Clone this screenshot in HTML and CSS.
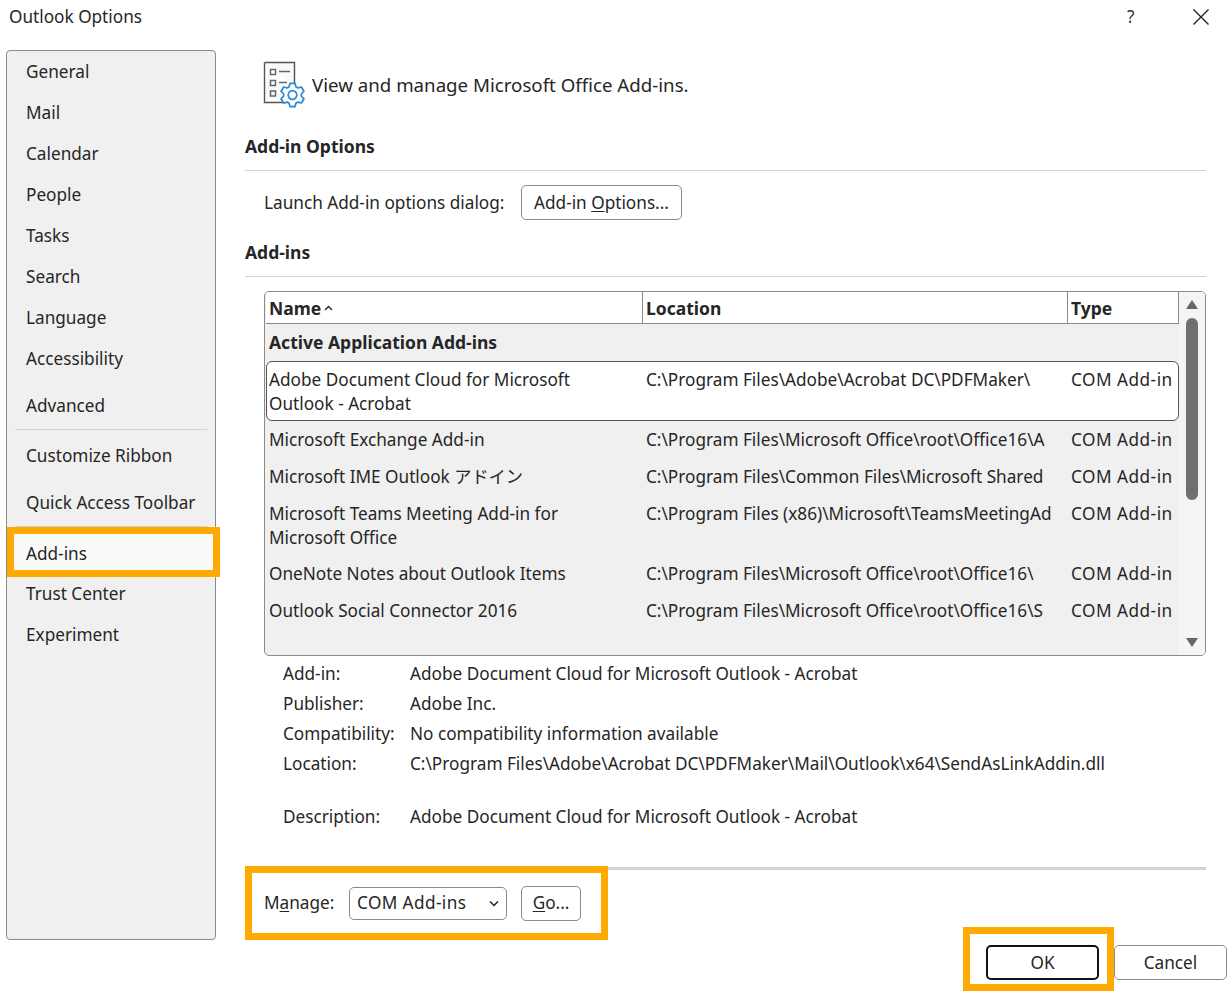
FILE: index.html
```html
<!DOCTYPE html>
<html lang="en">

<head>
    <meta charset="UTF-8">
    <meta name="viewport" content="width=device-width, initial-scale=1.0">
    <title>Outlook Options</title>
    <link rel="stylesheet" href="styles.css">
</head>

<body>
    <div class="titlebar">
        <div class="title">Outlook Options</div>
        <div class="help">?</div>
        <div class="close">
            <svg width="18" height="18" viewBox="0 0 18 18">
                <path d="M1.5 1.5L16.5 16.5M16.5 1.5L1.5 16.5" stroke="#222" stroke-width="1.4" fill="none" />
            </svg>
        </div>
    </div>

    <div class="content">
        <div class="sidebar">
            <div class="nav-item">General</div>
            <div class="nav-item">Mail</div>
            <div class="nav-item">Calendar</div>
            <div class="nav-item">People</div>
            <div class="nav-item">Tasks</div>
            <div class="nav-item">Search</div>
            <div class="nav-item">Language</div>
            <div class="nav-item">Accessibility</div>
            <div class="nav-item spaced">Advanced</div>
            <div class="nav-sep"></div>
            <div class="nav-item spaced">Customize Ribbon</div>
            <div class="nav-item spaced">Quick Access Toolbar</div>
            <div class="nav-sep"></div>
            <div class="nav-item selected">Add-ins</div>
            <div class="nav-item">Trust Center</div>
            <div class="nav-item">Experiment</div>
        </div>

        <div class="main">
            <div class="page-head">
                <svg class="page-icon" width="44" height="48" viewBox="0 0 44 48">
                    <path d="M2.5 2.5H32.5V26M24 42.5H2.5V2.5" fill="#fafafa" stroke="#555" stroke-width="1.4" />
                    <rect x="8.5" y="9.5" width="5" height="5" fill="none" stroke="#666" stroke-width="1.5" />
                    <rect x="8.5" y="20.5" width="5" height="5" fill="none" stroke="#666" stroke-width="1.5" />
                    <rect x="8.5" y="31" width="5" height="5" fill="none" stroke="#666" stroke-width="1.5" />
                    <path d="M17 11.5H28M17 22.5H25" stroke="#666" stroke-width="1.3" fill="none" />
                    <g transform="translate(30.5 35)">
                        <path d="M-2.5-11.7L2.5-11.7L3.4-8.3L5.5-7.1L8.9-8L11.4-3.7L8.9-1.25L8.9 1.25L11.4 3.7L8.9 8L5.5 7.1L3.4 8.3L2.5 11.7L-2.5 11.7L-3.4 8.3L-5.5 7.1L-8.9 8L-11.4 3.7L-8.9 1.25L-8.9-1.25L-11.4-3.7L-8.9-8L-5.5-7.1L-3.4-8.3Z"
                            fill="#fff" stroke="#2b88d8" stroke-width="1.7" stroke-linejoin="round" />
                        <circle r="4.3" fill="#fff" stroke="#2b88d8" stroke-width="1.7" />
                    </g>
                </svg>
                <div class="page-title">View and manage Microsoft Office Add-ins.</div>
            </div>

            <div class="section-head first">Add-in Options</div>
            <div class="launch-row">
                <div class="launch-label">Launch Add-in options dialog:</div>
                <div class="btn options-btn"><span>Add-in <u>O</u>ptions...</span></div>
            </div>

            <div class="section-head">Add-ins</div>

            <div class="list">
                <div class="list-body">
                    <div class="row list-header">
                        <div class="name-head">Name
                            <svg width="9" height="6" viewBox="0 0 9 6">
                                <path d="M1 5L4.5 1.5L8 5" fill="none" stroke="#333" stroke-width="1.5" />
                            </svg>
                        </div>
                        <div>Location</div>
                        <div>Type</div>
                    </div>
                    <div class="group-row">Active Application Add-ins</div>
                    <div class="row current">
                        <div>Adobe Document Cloud for Microsoft Outlook - Acrobat</div>
                        <div>C:\Program Files\Adobe\Acrobat DC\PDFMaker\</div>
                        <div class="type">COM Add-in</div>
                    </div>
                    <div class="row">
                        <div>Microsoft Exchange Add-in</div>
                        <div>C:\Program Files\Microsoft Office\root\Office16\A</div>
                        <div class="type">COM Add-in</div>
                    </div>
                    <div class="row">
                        <div>Microsoft IME Outlook アドイン</div>
                        <div>C:\Program Files\Common Files\Microsoft Shared</div>
                        <div class="type">COM Add-in</div>
                    </div>
                    <div class="row two-line">
                        <div>Microsoft Teams Meeting Add-in for Microsoft Office</div>
                        <div>C:\Program Files (x86)\Microsoft\TeamsMeetingAd</div>
                        <div class="type">COM Add-in</div>
                    </div>
                    <div class="row">
                        <div>OneNote Notes about Outlook Items</div>
                        <div>C:\Program Files\Microsoft Office\root\Office16\</div>
                        <div class="type">COM Add-in</div>
                    </div>
                    <div class="row">
                        <div>Outlook Social Connector 2016</div>
                        <div>C:\Program Files\Microsoft Office\root\Office16\S</div>
                        <div class="type">COM Add-in</div>
                    </div>
                </div>
                <div class="scrollbar">
                    <svg width="14" height="11" viewBox="0 0 14 11">
                        <path d="M7 1L13 10H1Z" fill="#666" />
                    </svg>
                    <div class="thumb"></div>
                    <svg width="14" height="11" viewBox="0 0 14 11">
                        <path d="M7 10L13 1H1Z" fill="#666" />
                    </svg>
                </div>
            </div>

            <div class="details">
                <div>Add-in:</div>
                <div>Adobe Document Cloud for Microsoft Outlook - Acrobat</div>
                <div>Publisher:</div>
                <div>Adobe Inc.</div>
                <div>Compatibility:</div>
                <div>No compatibility information available</div>
                <div>Location:</div>
                <div>C:\Program Files\Adobe\Acrobat DC\PDFMaker\Mail\Outlook\x64\SendAsLinkAddin.dll</div>
                <div class="desc">Description:</div>
                <div class="desc">Adobe Document Cloud for Microsoft Outlook - Acrobat</div>
            </div>

            <div class="manage-rule">
                <div class="manage-box">
                    <div class="manage-label">M<u>a</u>nage:</div>
                    <div class="select"><span class="select-text">COM Add-ins</span>
                        <svg width="10" height="7" viewBox="0 0 10 7">
                            <path d="M1 1.5L5 5.5L9 1.5" fill="none" stroke="#222" stroke-width="1.5" />
                        </svg>
                    </div>
                    <div class="btn go-btn"><span><u>G</u>o...</span></div>
                </div>
            </div>
        </div>
    </div>

    <div class="footer">
        <div class="ok-box">
            <div class="btn ok-btn">OK</div>
        </div>
        <div class="btn cancel-btn">Cancel</div>
    </div>
</body>

</html>
```

FILE: styles.css
```css
* {
    box-sizing: border-box;
}

html,
body {
    margin: 0;
    height: 100%;
    overflow: hidden;
}

body {
    background-color: #fff;
    color: #262626;
    font-family: "Noto Sans", "Noto Sans CJK JP", sans-serif;
    font-size: 17.2px;
    line-height: 24px;
}

u {
    text-underline-offset: 2px;
}

/* Title bar */
.titlebar {
    display: flex;
    align-items: center;
    height: 34px;
    margin-bottom: 16px;
    padding-left: 9px;
}

.title {
    flex: 1;
}

.help {
    width: 10px;
    margin-right: 55px;
    color: #333;
}

.close {
    display: flex;
    margin-right: 21px;
}

.content {
    display: flex;
    height: 890px;
}

/* Left navigation */
.sidebar {
    width: 210px;
    height: 890px;
    margin-left: 6px;
    padding-top: 1px;
    background-color: #f0f0f0;
    border: 1px solid #8a8a8a;
    border-radius: 4px;
}

.nav-item {
    display: flex;
    align-items: center;
    height: 41px;
    padding-left: 19px;
    padding-bottom: 2px;
}

.spaced {
    margin-top: 6px;
}

.nav-sep {
    height: 1px;
    margin: 2px 8px 0 8px;
    background-color: #d2d2d2;
}

.selected {
    position: relative;
    width: 213px;
    height: 50px;
    margin: 0 0 -3px 0;
    padding-left: 12px;
    padding-top: 3px;
    padding-bottom: 0;
    background-color: #fafafa;
    border: 7px solid #ffaa00;
}

/* Main panel */
.main {
    width: 961px;
    margin-left: 29px;
}

.page-head {
    display: flex;
    align-items: center;
    height: 50px;
    margin-left: 17px;
    margin-top: 8px;
}

.page-icon {
    margin-top: 2px;
    margin-right: 6px;
}

.page-title {
    margin-top: 3px;
    font-size: 18.7px;
}

.section-head {
    margin-top: 20px;
    padding-bottom: 12px;
    border-bottom: 1px solid #d2d2d2;
    font-size: 17.5px;
    font-weight: 700;
}

.first {
    margin-top: 26px;
}

.launch-row {
    display: flex;
    align-items: center;
    margin-top: 14px;
    padding-left: 19px;
}

.launch-label {
    width: 257px;
}

.btn {
    display: flex;
    align-items: center;
    justify-content: center;
    height: 35px;
    background-color: #fff;
    border: 1px solid #8a8a8a;
    border-radius: 5px;
}

.options-btn {
    width: 161px;
}

/* Add-ins list */
.list {
    display: flex;
    height: 365px;
    margin-top: 14px;
    margin-left: 19px;
    background-color: #f0f0f0;
    border: 1px solid #8a8a8a;
    border-radius: 5px;
    overflow: hidden;
}

.list-body {
    width: 914px;
    padding-left: 1px;
}

.row {
    display: grid;
    grid-template-columns: 377px 425px 111px;
    padding: 7px 0 6px 0;
}

.row > div {
    padding-left: 3px;
    white-space: nowrap;
}

.row > div:first-child {
    white-space: normal;
    padding-right: 60px;
}

.row > .type {
    letter-spacing: 0.5px;
}

.two-line {
    padding-bottom: 5px;
}

.list-header {
    height: 32px;
    padding: 0;
    background-color: #fff;
    border-bottom: 1px solid #8a8a8a;
    font-size: 17.5px;
    font-weight: 700;
}

.list-header > div {
    display: flex;
    align-items: center;
    gap: 3px;
    border-right: 1px solid #8a8a8a;
}

.group-row {
    height: 37px;
    padding: 6px 3px;
    font-size: 17.5px;
    font-weight: 700;
}

.current {
    height: 60px;
    background-color: #fff;
    border: 1px solid #555;
    border-radius: 6px;
    padding-top: 6px;
}

.current > div {
    margin-left: -1px;
}

.scrollbar {
    display: flex;
    flex-direction: column;
    align-items: center;
    flex: 1;
    padding-top: 7px;
    background-color: #f5f5f5;
}

.thumb {
    width: 12px;
    height: 182px;
    margin-top: 8px;
    margin-bottom: 137px;
    background-color: #707070;
    border-radius: 6px;
}

/* Details under the list */
.details {
    display: grid;
    grid-template-columns: 127px 1fr;
    grid-auto-rows: 30px;
    align-items: center;
    margin-top: 3px;
    padding-left: 38px;
}

.desc {
    margin-top: 46px;
}

/* Manage row */
.manage-rule {
    margin-top: 58px;
    border-top: 3px solid #d2d2d2;
}

.manage-box {
    display: flex;
    align-items: center;
    width: 363px;
    height: 74px;
    margin-top: -4px;
    padding-left: 12px;
    background-color: #fff;
    border: 7px solid #ffaa00;
}

.manage-label {
    width: 85px;
}

.select {
    display: flex;
    align-items: center;
    justify-content: space-between;
    width: 158px;
    height: 33px;
    padding: 0 7px 0 7px;
    border: 1px solid #8a8a8a;
    border-radius: 5px;
}

.select-text {
    letter-spacing: 0.4px;
}

.go-btn {
    width: 60px;
    margin-left: 14px;
}

/* OK / Cancel */
.footer {
    display: flex;
    justify-content: flex-end;
    margin-top: -13px;
    padding-right: 4px;
}

.ok-box {
    width: 151px;
    height: 64px;
    padding: 11px 8px 0 16px;
    border: 7px solid #ffaa00;
}

.ok-btn {
    width: 113px;
    border: 2px solid #111;
}

.cancel-btn {
    width: 113px;
    margin-top: 18px;
}
```
